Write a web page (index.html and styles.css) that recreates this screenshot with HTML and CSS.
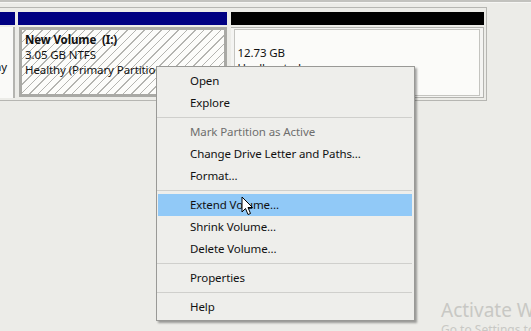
FILE: index.html
```html
<!DOCTYPE html>
<html lang="en">
<head>
    <meta charset="UTF-8">
    <title>Disk Management</title>
    <link rel="stylesheet" href="styles.css">
</head>
<body>
    <div class="top-strip"></div>

    <div class="disk">
        <div class="partition p-system">
            <div class="part-head blue"></div>
            <div class="part-body">
                <div class="line"></div>
                <div class="line"></div>
                <div class="line">Healthy</div>
            </div>
        </div>
        <div class="partition p-volume">
            <div class="part-head blue"></div>
            <div class="part-body hatched">
                <div class="line"><b>New Volume&nbsp; (I:)</b></div>
                <div class="line">3.05 GB NTFS</div>
                <div class="line">Healthy (Primary Partition)</div>
            </div>
        </div>
        <div class="partition p-free">
            <div class="part-head black"></div>
            <div class="part-body">
                <div class="part-inner">
                    <div class="line">&nbsp;</div>
                    <div class="line">12.73 GB</div>
                    <div class="line">Unallocated</div>
                </div>
            </div>
        </div>
    </div>

    <ul class="menu">
        <li>Open</li>
        <li>Explore</li>
        <li class="sep"></li>
        <li class="disabled">Mark Partition as Active</li>
        <li>Change Drive Letter and Paths...</li>
        <li>Format...</li>
        <li class="sep"></li>
        <li class="active">Extend Volume...</li>
        <li>Shrink Volume...</li>
        <li>Delete Volume...</li>
        <li class="sep"></li>
        <li>Properties</li>
        <li class="sep"></li>
        <li>Help</li>
    </ul>

    <svg class="cursor" width="13" height="20" viewBox="0 0 13 20">
        <path d="M1 1 L1 16 L4.5 12.5 L7 18.5 L9.5 17.5 L7 11.5 L11.5 11.5 Z" fill="#fff" stroke="#000" stroke-width="1" stroke-linejoin="round"/>
    </svg>

    <div class="watermark">
        <div class="wm-title">Activate Windows</div>
        <div class="wm-sub">Go to Settings to activate Windows.</div>
    </div>
</body>
</html>
```

FILE: styles.css
```css
body {
    margin: 0;
    width: 531px;
    height: 331px;
    overflow: hidden;
    position: relative;
    font-family: 'Noto Sans', 'Open Sans', sans-serif;
    font-size: 11.5px;
    letter-spacing: -0.1px;
    color: #111;
    background: #ecece8;
}

.top-strip {
    height: 2px;
    background: #c2c2be;
    border-bottom: 1px solid #f6f6f4;
}

/* disk row */
.disk {
    margin-top: 4px;
    width: 484px;
    height: 86px;
    padding: 4px 2px 2px 0;
    display: flex;
    border: 1px solid #b6b6b2;
    border-left: none;
}

.partition {
    display: flex;
    flex-direction: column;
}

.part-head {
    height: 13px;
    margin-bottom: 2px;
}

.part-head.blue {
    background: #000082;
}

.part-head.black {
    background: #000;
}

.part-body {
    flex: 1;
    background: #fafaf8;
    box-sizing: border-box;
}

.line {
    height: 15px;
    line-height: 15px;
    white-space: nowrap;
}

.p-system {
    width: 15px;
    margin-right: 3px;
}

.p-system .part-body {
    border-right: 2px solid #b4b4b0;
    overflow: hidden;
    padding: 2px 6px 0 0;
}

.p-system .line {
    display: flex;
    justify-content: flex-end;
}

.p-volume {
    width: 209px;
    margin-right: 4px;
}

.p-volume .part-body {
    margin: 0 0 1px 1px;
    border: 3px solid #a9a9a5;
    padding: 2px 3px;
    overflow: hidden;
    background: repeating-linear-gradient(-45deg, #fcfcfa 0, #fcfcfa 5px, #b4b4b0 5px, #b4b4b0 6px);
}

.p-free {
    width: 254px;
}

.p-free .part-body {
    border: 1px solid #b4b4b0;
    border-left: none;
    padding: 1px 3px 1px 3px;
    display: flex;
    background: #f4f4f2;
}

.part-inner {
    flex: 1;
    background: #fbfbf9;
    border: 1px solid #c4c4c0;
    padding: 0 3px;
    overflow: hidden;
}

/* context menu */
.menu {
    position: absolute;
    left: 156px;
    top: 66px;
    width: 257px;
    margin: 0;
    padding: 3px 0 2px;
    list-style: none;
    background: #eeeeeb;
    border: 1px solid #999996;
    box-shadow: 2px 2px 2px rgba(0, 0, 0, 0.35);
}

.menu li {
    height: 22px;
    line-height: 22px;
    margin: 0 2px 0 1px;
    padding-left: 32px;
    white-space: nowrap;
    color: #111;
}

.menu li.disabled {
    color: #6e6e6e;
}

.menu li.active {
    background: #91c9f7;
}

.menu li.sep {
    height: 1px;
    padding: 0;
    margin: 3px 2px 3px 0;
    background: #cfcfcc;
}

.cursor {
    position: absolute;
    left: 241px;
    top: 196px;
}

.watermark {
    position: absolute;
    left: 441px;
    top: 298px;
    white-space: nowrap;
    letter-spacing: 0;
    color: #c8c8c4;
}

.wm-title {
    font-size: 19px;
    line-height: 24px;
}

.wm-sub {
    font-size: 12px;
    line-height: 16px;
}
```
